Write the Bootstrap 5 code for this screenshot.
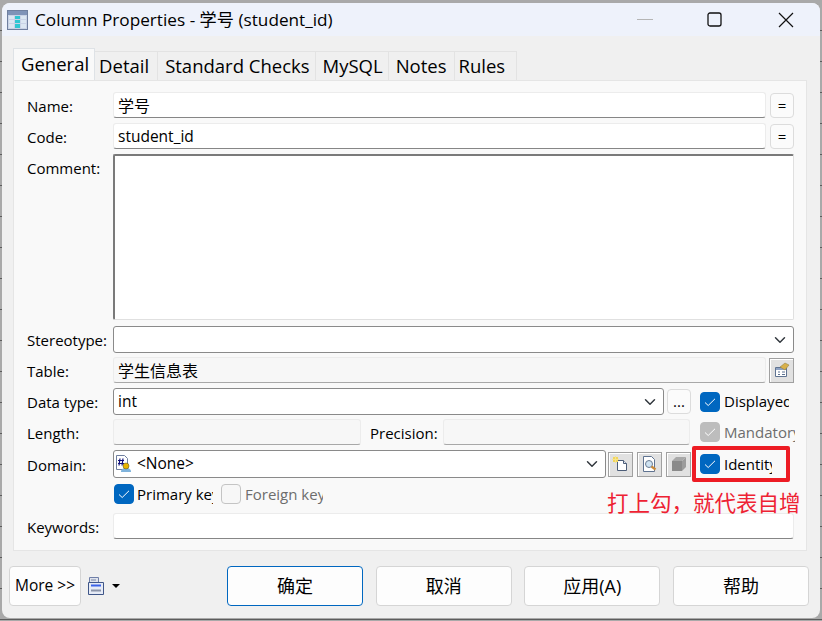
<!DOCTYPE html>
<html lang="en">
<head>
  <meta charset="UTF-8">
  <meta name="viewport" content="width=device-width, initial-scale=1.0">
  <title>Column Properties</title>
  <link href="https://cdn.jsdelivr.net/npm/bootstrap@5.3.0/dist/css/bootstrap.min.css" rel="stylesheet">
  <style>
    html, body { height: 100%; }
    body {
      background: #a9a9a9 repeating-linear-gradient(180deg, #a9a9a9 0 30px, #5c5c5c 30px 31px);
      margin: 0;
      overflow: hidden;
      font-family: "Open Sans", "Noto Sans CJK SC", sans-serif;
      font-size: 15px;
      color: #000;
    }
    .dlg-window {
      position: relative;
      width: 818px;
      height: 615px;
      margin: 3px 0 0 2px;
      background: #f0f0f0;
      border-radius: 8px;
      overflow: hidden;
    }
    .dlg-titlebar {
      height: 33px;
      background: #eef2fb;
      padding-left: 5px;
      font-size: 17.2px;
    }
    .dlg-title { margin-left: 7px; }
    .win-min { margin-left: auto; margin-right: 54px; }
    .win-max { margin-right: 56px; }
    .win-close { margin-right: 26px; }
    .dlg-titlebar svg { display: block; }

    .dlg-tabs { margin: 11px 0 0 11px; height: 33px; border: 0; flex-wrap: nowrap; align-items: flex-end; }
    .dlg-tabs .nav-link {
      height: 29px;
      padding: 0 5px 0 7px;
      margin: 0 -1px 0 0;
      font-size: 18.5px;
      line-height: 28px;
      color: #000;
      background: #f0f0f0;
      border: 1px solid #e3e3e3;
      border-bottom: 0;
      border-radius: 0;
    }
    .dlg-tabs .nav-link.active {
      height: 32px;
      background: #f9f9f9;
      line-height: 29px;
      padding: 0 5px 0 7px;
      position: relative;
      z-index: 1;
    }
    .dlg-tabs .tab-detail { padding: 0 8px 0 4px; }
    .dlg-tabs .tab-late { padding: 0 7px; }
    .dlg-tabs .tab-last { padding: 0 11px 0 4px; }
    .dlg-pane {
      margin-left: 11px;
      width: 794px;
      height: 471px;
      background: #f9f9f9;
      border: 1px solid #e5e5e5;
      padding: 11px 12px 0 13px;
    }
    .field-row { display: flex; align-items: center; height: 26px; margin-bottom: 5px; }
    .row-comment { height: 166px; margin-bottom: 6px; align-items: flex-start; }
    .row-tall { height: 27px; margin-bottom: 4px; }
    .row-domain { height: 28px; margin-bottom: 6px; }
    .row-keys { height: 20px; margin-bottom: 9px; }
    .field-label { width: 86px; flex: none; white-space: nowrap; font-size: 15px; padding-top: 2px; }
    .row-comment .field-label { padding-top: 3px; }

    .dlg-input.form-control, .dlg-input.form-select {
      height: 100%;
      padding: 0 4px;
      font-size: 15.5px;
      line-height: 1;
      color: #000;
      background-color: #fff;
      border: 1px solid #ececec;
      border-bottom: 1px solid #868686;
      border-radius: 3px;
      box-shadow: none;
      min-height: 0;
    }
    .dlg-input.form-select {
      border: 1px solid #8a8a8a;
      background-size: 16px 12px;
      background-position: right 5px center;
    }
    .dlg-input.is-readonly { background-color: #f7f7f7; border-bottom-color: #a8a8a8; }
    .dlg-input.is-cjk { font-size: 16px; }
    .dlg-input.is-comment {
      border: 1px solid #e0e0e0;
      border-top: 2px solid #7a7a7a;
      border-left: 2px solid #7a7a7a;
      border-radius: 2px;
      resize: none;
      width: 681px;
      height: 166px;
      flex: none;
    }
    .w-wide { width: 653px; flex: none; }
    .w-full { width: 681px; flex: none; }
    .w-type { width: 551px; flex: none; }
    .w-len { width: 248px; flex: none; }
    .w-prec { width: 247px; flex: none; }
    .domain-wrap { position: relative; width: 493px; height: 100%; flex: none; }
    .domain-wrap .form-select { width: 100%; padding-left: 23px; }
    .domain-icon { position: absolute; left: 3px; top: 5px; }

    .sq-btn {
      width: 24px;
      height: 25px;
      flex: none;
      padding: 0;
      margin-left: 4px;
      font-size: 15px;
      line-height: 1;
      color: #000;
      background: #fbfbfb;
      border: 1px solid #dcdcdc;
      border-radius: 4px;
    }
    .sq-btn.is-dots { margin-left: 3px; }
    .tool-btn {
      width: 25px;
      height: 25px;
      flex: none;
      padding: 0;
      margin-left: 4px;
      background: #e1e1e1;
      border: 1px solid #a0a0a0;
      border-radius: 0;
      box-shadow: inset 1px 1px #fff;
      display: flex;
      align-items: center;
      justify-content: center;
    }
    .tool-btn.is-first { margin-left: 2px; }
    .tool-btn.is-table { margin-left: 3px; }
    .check-item { display: flex; align-items: center; overflow: hidden; white-space: nowrap; flex: none; font-size: 15px; }
    .check-item .form-check-input {
      width: 20px;
      height: 20px;
      flex: none;
      margin: 0 4px 0 0;
      border-radius: 4px;
      border: 1px solid #c4c4c4;
      background-color: #f7f7f7;
      opacity: 1;
      box-shadow: none;
    }
    .check-item .form-check-input:checked {
      background-color: #0067c0;
      border-color: #0067c0;
      background-size: 14px 14px;
      background-image: url("data:image/svg+xml,%3Csvg xmlns='http://www.w3.org/2000/svg' viewBox='0 0 14 14'%3E%3Cpath d='M2 7.500l3.200 3L12 3.800' fill='none' stroke='%23fff' stroke-width='1'/%3E%3C/svg%3E");
    }
    .check-item .form-check-input:disabled:checked { background-color: #bdbdbd; border-color: #bdbdbd; }
    .is-off { color: #6d6d6d; }
    .cut-display { width: 89px; margin-left: 9px; }
    .cut-mand { width: 95px; margin-left: 10px; }
    .cut-ident { width: 72px; margin-left: 9px; }
    .cut-pk { width: 99px; margin-left: 1px; }
    .cut-pk .form-check-input { margin-right: 3px; }
    .cut-fk { width: 102px; margin-left: 8px; }
    .prec-label { margin-left: 9px; width: 73px; flex: none; font-size: 15px; padding-top: 2px; }

    .dlg-footer { margin-top: 15px; padding-left: 7px; }
    .foot-btn {
      width: 136px;
      height: 40px;
      padding: 0;
      font-size: 18px;
      color: #000;
      background: #fdfdfd;
      border: 1px solid #d5d5d5;
      border-radius: 4px;
      flex: none;
    }
    .foot-btn.is-more { width: 72px; font-size: 15.5px; }
    .foot-btn + .foot-btn { margin-left: 12.67px; }
    .foot-btn.is-default { border-color: #0067c0; margin-left: 107px; }
    .foot-icon { margin-left: 7px; }
    .foot-caret { margin-left: 8px; width: 0; height: 0; border: 4px solid transparent; border-top: 4px solid #000; border-bottom: 0; }

    .red-box {
      position: absolute;
      left: 690px;
      top: 443px;
      width: 98px;
      height: 36px;
      border: 4px solid #ed1c24;
      border-radius: 2px;
    }
    .red-note {
      position: absolute;
      left: 605px;
      top: 485px;
      font-size: 21.5px;
      line-height: 28px;
      color: #ee2233;
      white-space: nowrap;
      font-family: "Noto Sans CJK SC", sans-serif;
    }
  </style>
</head>
<body>
  <div class="dlg-window">
    <div class="dlg-titlebar d-flex align-items-center">
      <svg width="21" height="20" viewBox="0 0 21 20">
        <rect x="0.500" y="0.500" width="20" height="19" fill="#c9d2e6" stroke="#6f7f9f"/>
        <rect x="1" y="1" width="19" height="4" fill="#7f93b8"/>
        <g fill="#dbe6f2"><rect x="2" y="6" width="5" height="3"/><rect x="2" y="10" width="5" height="3"/><rect x="2" y="14" width="5" height="4"/><rect x="14" y="6" width="5" height="3"/><rect x="14" y="10" width="5" height="3"/><rect x="14" y="14" width="5" height="4"/></g>
        <g fill="#2fc6d2"><rect x="8" y="6" width="5" height="3"/><rect x="8" y="10" width="5" height="3"/><rect x="8" y="14" width="5" height="4"/></g>
      </svg>
      <span class="dlg-title">Column Properties - 学号 (student_id)</span>
      <div class="win-min"><svg width="16" height="2"><rect width="16" height="1" fill="#b5b5b5"/></svg></div>
      <div class="win-max"><svg width="15" height="15"><rect x="1" y="1" width="13" height="13" rx="2" fill="none" stroke="#111" stroke-width="1.300"/></svg></div>
      <div class="win-close"><svg width="16" height="16"><path d="M1 1l14 14M15 1L1 15" stroke="#111" stroke-width="1.200"/></svg></div>
    </div>

    <ul class="nav nav-tabs dlg-tabs">
      <li class="nav-item"><a class="nav-link active" href="#">General</a></li>
      <li class="nav-item"><a class="nav-link tab-detail" href="#">Detail</a></li>
      <li class="nav-item"><a class="nav-link" href="#">Standard Checks</a></li>
      <li class="nav-item"><a class="nav-link" href="#">MySQL</a></li>
      <li class="nav-item"><a class="nav-link tab-late" href="#">Notes</a></li>
      <li class="nav-item"><a class="nav-link tab-last" href="#">Rules</a></li>
    </ul>

    <div class="dlg-pane">
      <div class="field-row">
        <span class="field-label">Name:</span>
        <input class="form-control dlg-input is-cjk w-wide" value="学号">
        <button class="btn sq-btn">=</button>
      </div>
      <div class="field-row">
        <span class="field-label">Code:</span>
        <input class="form-control dlg-input w-wide" value="student_id">
        <button class="btn sq-btn">=</button>
      </div>
      <div class="field-row row-comment">
        <span class="field-label">Comment:</span>
        <textarea class="form-control dlg-input is-comment"></textarea>
      </div>
      <div class="field-row row-tall">
        <span class="field-label">Stereotype:</span>
        <select class="form-select dlg-input w-full"><option></option></select>
      </div>
      <div class="field-row">
        <span class="field-label">Table:</span>
        <input class="form-control dlg-input is-readonly is-cjk w-wide" value="学生信息表" readonly>
        <button class="btn tool-btn is-table">
          <svg width="18" height="18" viewBox="0 0 18 18"><path d="M2.500 6.500h11v9h-11z" fill="#fff" stroke="#5f7391"/><path d="M3 7h10v2H3z" fill="#8fa3c4"/><path d="M5 11h2M9 11h3M5 13.500h2M9 13.500h3" stroke="#5f7391"/><path d="M7 6l5-4 4 2-4 5z" fill="#d8b04a" stroke="#8b7a3c" stroke-width=".5"/></svg>
        </button>
      </div>
      <div class="field-row row-tall">
        <span class="field-label">Data type:</span>
        <select class="form-select dlg-input w-type"><option>int</option></select>
        <button class="btn sq-btn is-dots">...</button>
        <label class="check-item cut-display"><input class="form-check-input" type="checkbox" checked>Displayed</label>
      </div>
      <div class="field-row">
        <span class="field-label">Length:</span>
        <input class="form-control dlg-input is-readonly w-len" readonly>
        <span class="prec-label">Precision:</span>
        <input class="form-control dlg-input is-readonly w-prec" readonly>
        <label class="check-item cut-mand is-off"><input class="form-check-input" type="checkbox" checked disabled>Mandatory</label>
      </div>
      <div class="field-row row-domain">
        <span class="field-label">Domain:</span>
        <div class="domain-wrap">
          <select class="form-select dlg-input"><option>&lt;None&gt;</option></select>
          <svg class="domain-icon" width="16" height="18" viewBox="0 0 16 18"><path d="M.5.500h8l3 3v11H.5z" fill="#fff" stroke="#6f7f9f"/><path d="M4 3.500l-1 7M7 3.500l-1 7M2 5.500h6M2 8.500h6" stroke="#10107a" stroke-width="1.200"/><path d="M5 17c0-3 2-4 5-4s5 1 5 4z" fill="#7fb3dc"/><circle cx="10" cy="11" r="3" fill="#e8b400" stroke="#5a4a10" stroke-width=".5"/></svg>
        </div>
        <button class="btn tool-btn is-first">
          <svg width="18" height="18" viewBox="0 0 18 18"><path d="M5.500 5.500h6l3 3v7h-9z" fill="#fff" stroke="#4c5d78"/><path d="M11.500 5.500v3h3" fill="#dfe6f0" stroke="#4c5d78"/><path d="M1 2h5v5H1z" fill="#f2d65a"/><path d="M3.500 1v7M0 4.500h7" stroke="#f6e38f"/></svg>
        </button>
        <button class="btn tool-btn">
          <svg width="18" height="18" viewBox="0 0 18 18"><path d="M2.500 1.500h8l3 3v12h-11z" fill="#fff" stroke="#5f7391"/><circle cx="8" cy="9" r="3.500" fill="#cfe3f2" stroke="#6b7c93"/><path d="M10.500 11.500l4 3" stroke="#c98a3a" stroke-width="2.200"/></svg>
        </button>
        <button class="btn tool-btn">
          <svg width="18" height="18" viewBox="0 0 18 18"><path d="M2 6h10v10H2z" fill="#8a8a8a"/><path d="M12 6l4-4v10l-4 4z" fill="#9c9c9c"/><path d="M2 6l4-4h10l-4 4z" fill="#a8a8a8"/></svg>
        </button>
        <label class="check-item cut-ident"><input class="form-check-input" type="checkbox" checked>Identity</label>
      </div>
      <div class="field-row row-keys">
        <span class="field-label"></span>
        <label class="check-item cut-pk"><input class="form-check-input" type="checkbox" checked>Primary key</label>
        <label class="check-item cut-fk is-off"><input class="form-check-input" type="checkbox" disabled>Foreign key</label>
      </div>
      <div class="field-row">
        <span class="field-label">Keywords:</span>
        <input class="form-control dlg-input w-full">
      </div>
    </div>

    <div class="dlg-footer d-flex align-items-center">
      <button class="btn foot-btn is-more">More &gt;&gt;</button>
      <svg class="foot-icon" width="16" height="18" viewBox="0 0 16 18"><path d="M1.500.500h9v5h-9z" fill="#dfe3ec" stroke="#6f7fa8"/><path d="M3 3h5" stroke="#7886a8"/><path d="M.5 5.500h15v12H.5z" fill="#e6ebf6" stroke="#3f5688"/><path d="M3 8.500h10" stroke="#3a62e8" stroke-width="2"/><path d="M3 13.500h10" stroke="#8a93a8" stroke-width="2"/></svg>
      <span class="foot-caret"></span>
      <button class="btn foot-btn is-default">确定</button>
      <button class="btn foot-btn">取消</button>
      <button class="btn foot-btn">应用(A)</button>
      <button class="btn foot-btn">帮助</button>
    </div>

    <div class="red-box"></div>
    <div class="red-note">打上勾，就代表自增</div>
  </div>
  <script src="https://cdn.jsdelivr.net/npm/bootstrap@5.3.0/dist/js/bootstrap.bundle.min.js"></script>
</body>
</html>
